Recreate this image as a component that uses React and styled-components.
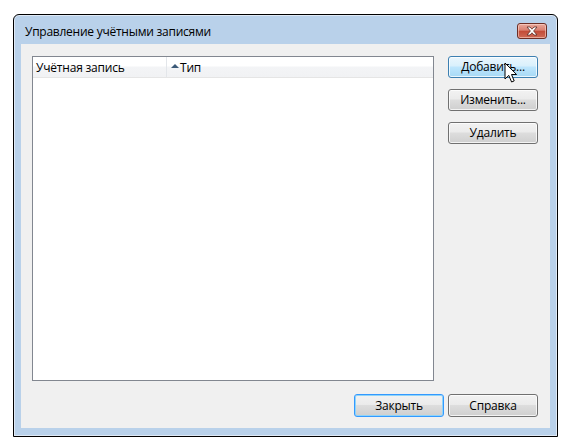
import React from "react";
import styled, { createGlobalStyle } from "styled-components";

const Global = createGlobalStyle`
  html, body { margin: 0; padding: 0; background: #ffffff; }
  body { font-family: "Open Sans", "Noto Sans", sans-serif; font-size: 12px; color: #000; }
`;

const Page = styled.div`
  padding: 14px 0 0 13px;
`;

const Window = styled.div`
  position: relative;
  box-sizing: border-box;
  width: 545px;
  height: 423px;
  border: 1px solid #000;
  border-radius: 6px 6px 0 0;
  background: #b9d1ea;
  box-shadow: inset 0 0 0 1px #dfe9f5;
  display: flex;
  flex-direction: column;
  padding: 0 7px 8px 7px;
`;

const TitleBar = styled.div`
  height: 29px;
  display: flex;
  align-items: center;
  justify-content: space-between;
`;

const Title = styled.div`
  font-size: 12px;
  letter-spacing: -0.25px;
  padding-left: 4px;
  padding-top: 4px;
  color: #000;
`;

const CloseBtn = styled.div`
  box-sizing: border-box;
  width: 30px;
  height: 16px;
  margin-top: 2px;
  margin-right: 3px;
  border: 1px solid #6d2e25;
  border-radius: 3px;
  background: linear-gradient(#e9a99c 0%, #d98070 45%, #c24a37 50%, #cf6b56 100%);
  box-shadow: inset 0 0 0 1px rgba(255, 220, 210, 0.55);
  display: flex;
  align-items: center;
  justify-content: center;
`;

const Client = styled.div`
  flex: 1;
  background: #f0f0f0;
  display: flex;
  flex-direction: column;
  padding: 12px 12px 11px 11px;
`;

const Main = styled.div`
  flex: 1;
  display: flex;
  gap: 14px;
`;

const List = styled.div`
  box-sizing: border-box;
  width: 402px;
  height: 325px;
  border: 1px solid #828790;
  background: #fff;
`;

const Header = styled.div`
  height: 20px;
  display: flex;
  border-bottom: 1px solid #e5e5e5;
  background: linear-gradient(#ffffff 0%, #ffffff 45%, #f3f4f6 50%, #f1f2f4 100%);
`;

const HeaderCell = styled.div`
  box-sizing: border-box;
  width: ${(p) => p.$w};
  display: flex;
  align-items: center;
  padding-left: ${(p) => p.$pad}px;
  border-right: ${(p) => (p.$sep ? "1px solid #e3e6ea" : "none")};
  color: #1e395b;
  color: #000;
  letter-spacing: -0.2px;
`;

const SortArrow = styled.span`
  display: inline-block;
  width: 0;
  height: 0;
  border-left: 4px solid transparent;
  border-right: 4px solid transparent;
  border-bottom: 4px solid #3c5a78;
  margin-right: 1px;
  margin-bottom: 3px;
`;

const Side = styled.div`
  display: flex;
  flex-direction: column;
  gap: 11px;
`;

const Button = styled.div`
  box-sizing: border-box;
  width: 90px;
  height: ${(p) => p.$h || 22}px;
  border: 1px solid ${(p) => (p.$hover ? "#3c7fb1" : p.$def ? "#3399ff" : "#707070")};
  border-radius: 3px;
  background: ${(p) =>
    p.$hover
      ? "linear-gradient(#eaf6fd 0%, #d9f0fc 45%, #bee6fd 50%, #a7d9f5 100%)"
      : "linear-gradient(#f2f2f2 0%, #ebebeb 45%, #dddddd 50%, #cfcfcf 100%)"};
  box-shadow: inset 0 0 0 1px ${(p) => (p.$def ? "#8fd4f9" : "rgba(255,255,255,0.75)")};
  display: flex;
  align-items: center;
  justify-content: center;
  letter-spacing: -0.2px;
  padding-bottom: 1px;
`;

const Footer = styled.div`
  display: flex;
  justify-content: flex-end;
  gap: 4px;
`;

const Cursor = styled.svg`
  position: absolute;
  left: 490px;
  top: 47px;
  pointer-events: none;
`;

export default function App() {
  return (
    <>
      <Global />
      <Page>
        <Window>
          <TitleBar>
            <Title>Управление учётными записями</Title>
            <CloseBtn>
              <svg width="14" height="10" viewBox="0 0 14 10">
                <path
                  d="M2 1 L5 1 L7 3.2 L9 1 L12 1 L8.6 5 L12 9 L9 9 L7 6.8 L5 9 L2 9 L5.4 5 Z"
                  fill="#fff"
                  stroke="#5a2b24"
                  strokeWidth="0.8"
                  strokeLinejoin="round"
                />
              </svg>
            </CloseBtn>
          </TitleBar>
          <Client>
            <Main>
              <List>
                <Header>
                  <HeaderCell $w="134px" $pad={3} $sep>
                    Учётная запись
                  </HeaderCell>
                  <HeaderCell $w="auto" $pad={4}>
                    <SortArrow />
                    Тип
                  </HeaderCell>
                </Header>
              </List>
              <Side>
                <Button $hover>Добавить...</Button>
                <Button>Изменить...</Button>
                <Button>Удалить</Button>
              </Side>
            </Main>
            <Footer>
              <Button $def $h={23}>Закрыть</Button>
              <Button $h={23}>Справка</Button>
            </Footer>
          </Client>
          <Cursor width="14" height="22" viewBox="0 0 14 22">
            <path
              d="M1 1 L1 17 L4.8 13.4 L7.6 20 L10.2 18.9 L7.5 12.5 L12.6 12.5 Z"
              fill="#fff"
              stroke="#000"
              strokeWidth="1"
              strokeLinejoin="miter"
            />
          </Cursor>
        </Window>
      </Page>
    </>
  );
}
